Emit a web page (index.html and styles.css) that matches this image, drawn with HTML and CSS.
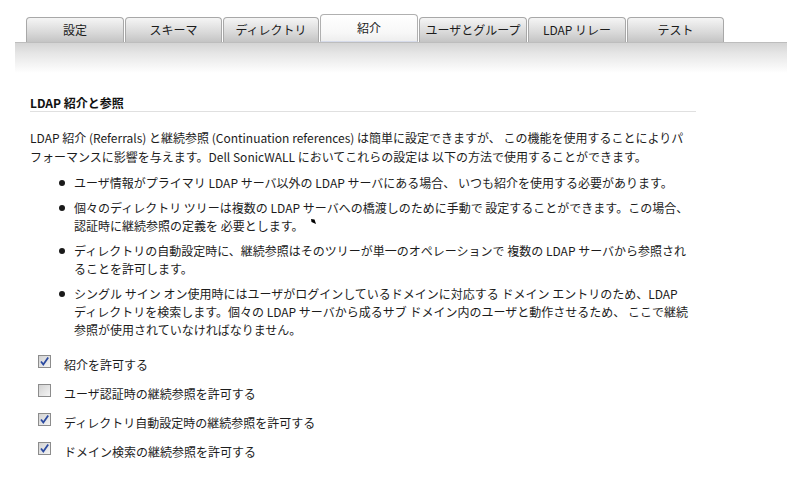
FILE: index.html
```html
<!DOCTYPE html>
<html lang="ja">
<head>
<meta charset="utf-8">
<title>LDAP 紹介と参照</title>
<link rel="stylesheet" href="styles.css">
</head>
<body>
<div class="tabs">
  <div class="tab t1">設定</div>
  <div class="tab t2">スキーマ</div>
  <div class="tab t3">ディレクトリ</div>
  <div class="tab active t4">紹介</div>
  <div class="tab t5">ユーザとグループ</div>
  <div class="tab t6">LDAP リレー</div>
  <div class="tab t7">テスト</div>
</div>
<div class="band"></div>
<div class="content">
  <h2 class="heading">LDAP 紹介と参照</h2>
  <p class="intro">LDAP 紹介 (Referrals) と継続参照 (Continuation references) は簡単に設定できますが、 この機能を使用することによりパ<br>フォーマンスに影響を与えます。Dell SonicWALL においてこれらの設定は 以下の方法で使用することができます。</p>
  <ul class="list">
    <li>ユーザ情報がプライマリ LDAP サーバ以外の LDAP サーバにある場合、 いつも紹介を使用する必要があります。</li>
    <li>個々のディレクトリ ツリーは複数の LDAP サーバへの橋渡しのために手動で 設定することができます。この場合、<br>認証時に継続参照の定義を 必要とします。<svg class="mark" width="6" height="6" viewBox="0 0 6 6"><polygon points="0,0 3.5,0.5 5,5 0.5,3" fill="#000"/></svg></li>
    <li>ディレクトリの自動設定時に、継続参照はそのツリーが単一のオペレーションで 複数の LDAP サーバから参照され<br>ることを許可します。</li>
    <li>シングル サイン オン使用時にはユーザがログインしているドメインに対応する ドメイン エントリのため、LDAP<br>ディレクトリを検索します。個々の LDAP サーバから成るサブ ドメイン内のユーザと動作させるため、 ここで継続<br>参照が使用されていなければなりません。</li>
  </ul>
  <div class="options">
    <label class="opt"><span class="cb checked"><svg width="11" height="11" viewBox="0 0 11 11"><path d="M2 5.5 L4.3 8.5 L9.2 1.5" fill="none" stroke="#2b4aa0" stroke-width="1.8"/></svg></span><span class="lbl">紹介を許可する</span></label>
    <label class="opt"><span class="cb"></span><span class="lbl">ユーザ認証時の継続参照を許可する</span></label>
    <label class="opt"><span class="cb checked"><svg width="11" height="11" viewBox="0 0 11 11"><path d="M2 5.5 L4.3 8.5 L9.2 1.5" fill="none" stroke="#2b4aa0" stroke-width="1.8"/></svg></span><span class="lbl">ディレクトリ自動設定時の継続参照を許可する</span></label>
    <label class="opt"><span class="cb checked"><svg width="11" height="11" viewBox="0 0 11 11"><path d="M2 5.5 L4.3 8.5 L9.2 1.5" fill="none" stroke="#2b4aa0" stroke-width="1.8"/></svg></span><span class="lbl">ドメイン検索の継続参照を許可する</span></label>
  </div>
</div>
</body>
</html>
```

FILE: styles.css
```css
html, body {
  margin: 0;
  padding: 0;
  background: #fff;
}
body {
  font-family: "Noto Sans CJK JP", "Noto Sans", sans-serif;
  font-size: 12px;
  color: #1c1c1c;
  width: 787px;
}
.tabs {
  display: flex;
  align-items: flex-end;
  gap: 1px;
  padding-left: 26px;
  padding-top: 15px;
  height: 27px;
}
.tab {
  box-sizing: border-box;
  width: 98px;
  height: 25px;
  border: 1px solid #a8a8a8;
  border-bottom: none;
  border-radius: 4px 4px 0 0;
  background: linear-gradient(#f5f5f5, #d9d9d9 60%, #c4c4c4);
  text-align: center;
  line-height: 23px;
  color: #1c1c1c;
  font-size: 12px;
}
.tab.t2 { width: 97px; }
.tab.t3 { width: 96px; }
.tab.t5 { width: 108px; }
.tab.t7 { width: 97px; }
.tab.active {
  height: 28px;
  line-height: 26px;
  background: linear-gradient(#ffffff, #f7f7f7 70%, #eeeeee);
  border-color: #b0b0b0;
  border-bottom: 1px solid #d6dbea;
  position: relative;
  z-index: 1;
}
.band {
  margin-left: 15px;
  height: 30px;
  border-top: 1px solid #bdbdbd;
  background: linear-gradient(#d4d4d4, #e6e6e6 35%, #ffffff);
}
.content {
  margin-left: 30px;
  width: 666px;
}
.heading {
  margin: 22px 0 0 0;
  font-size: 12px;
  font-weight: bold;
  line-height: 16px;
  padding-bottom: 0;
  border-bottom: 1px solid #e0e0e0;
  color: #111;
}
.intro {
  margin: 16px 0 0 0;
  line-height: 19px;
  white-space: nowrap;
}
.list {
  margin: 8px 0 0 0;
  padding: 0 0 0 44px;
  list-style: none;
}
.list li {
  position: relative;
  line-height: 18px;
  margin-bottom: 7px;
  white-space: nowrap;
}
.list li::before {
  content: "";
  position: absolute;
  left: -15px;
  top: 6px;
  width: 6px;
  height: 6px;
  border-radius: 50%;
  background: #1a1a1a;
}
.mark {
  vertical-align: 6px;
  margin-left: 7px;
}
.options {
  display: flex;
  flex-direction: column;
  gap: 11px;
  margin-top: 16px;
  padding-left: 8px;
}
.opt {
  display: flex;
  align-items: center;
  gap: 13px;
  height: 18px;
}
.cb {
  box-sizing: border-box;
  width: 13px;
  height: 13px;
  border: 1px solid #8c8c8c;
  background: linear-gradient(135deg, #d2d2d2, #f4f4f4);
  display: flex;
  align-items: center;
  justify-content: center;
  margin-top: -5px;
}
.cb svg { display: block; }
.lbl {
  line-height: 18px;
  padding-top: 2px;
}
```
